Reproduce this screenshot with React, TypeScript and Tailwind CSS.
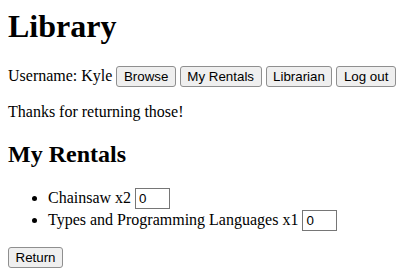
import React from "react";

const btn =
  "inline-block align-baseline font-['Liberation_Sans',Arial,sans-serif] text-[13.333px] leading-[normal] text-black bg-[#efefef] border border-[#8f8f8f] rounded-[3px] px-[6.5px] py-[2px]";

const inp =
  "inline-block align-baseline font-['Liberation_Sans',Arial,sans-serif] text-[13.333px] leading-[normal] text-black bg-white border border-[#767676] px-[3px] py-[1px] w-[35px] h-[21px]";

export default function App() {
  return (
    <div className="bg-white text-black font-['Liberation_Serif','Times_New_Roman',serif] text-[16px] leading-[normal] px-[8px] pt-[8px] pb-[8px] min-h-[279px]">
      <h1 className="text-[32px] font-bold leading-[normal] mb-[21.44px]">Library</h1>
      <div>
        Username: Kyle{" "}
        <button className={btn}>Browse</button>{" "}
        <button className={btn}>My Rentals</button>{" "}
        <button className={btn}>Librarian</button>{" "}
        <button className={btn}>Log out</button>
      </div>
      <p className="my-[16px]">Thanks for returning those!</p>
      <h2 className="text-[24px] font-bold leading-[normal] mt-[19.92px] mb-[19.92px]">My Rentals</h2>
      <ul className="list-disc pl-[40px] my-[16px]">
        <li className="mb-[1px]">
          Chainsaw x2 <input className={inp} defaultValue="0" readOnly />
        </li>
        <li>
          Types and Programming Languages x1 <input className={inp} defaultValue="0" readOnly />
        </li>
      </ul>
      <button className={btn}>Return</button>
    </div>
  );
}
